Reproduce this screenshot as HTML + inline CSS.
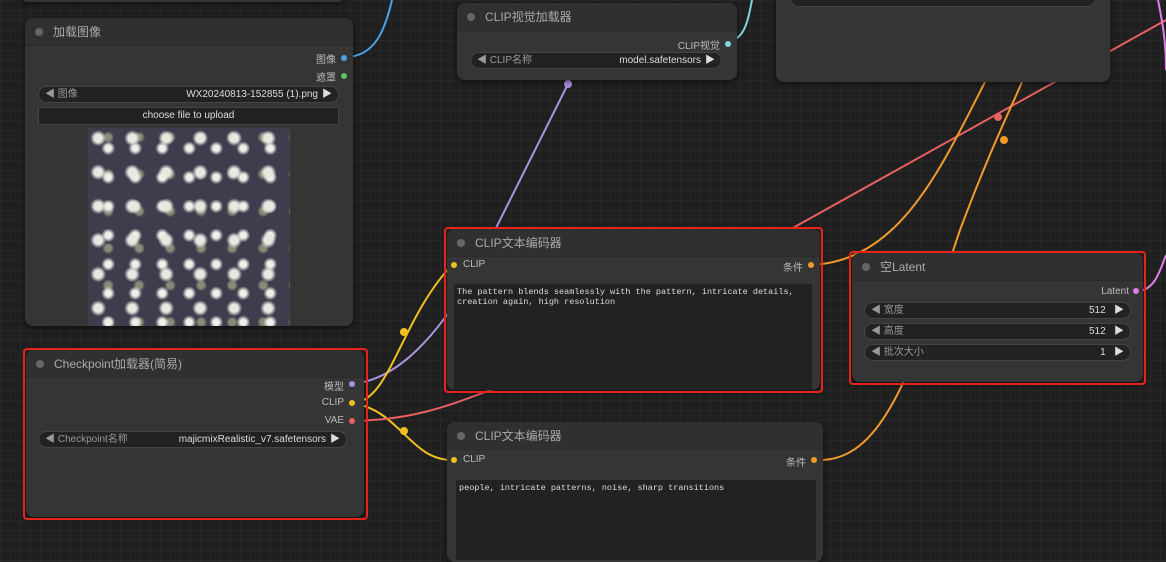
<!DOCTYPE html>
<html><head><meta charset="utf-8"><style>
*{box-sizing:border-box;margin:0;padding:0}
body{width:1166px;height:553px;overflow:hidden;background:#1f1f1f;font-family:"Liberation Sans","Noto Sans CJK SC",sans-serif;position:relative;
background-image:linear-gradient(#272727 1px,transparent 1px),linear-gradient(90deg,#272727 1px,transparent 1px);background-size:10px 10px}
.n{position:absolute;background:#353535;border-radius:8px;box-shadow:0 2px 6px rgba(0,0,0,.5)}
.h{height:28px;background:#303030;border-radius:8px 8px 0 0;color:#aaa;font-size:12px;line-height:28px;padding-left:28px;position:relative;border-bottom:1px solid #2b2b2b}
.h:before{content:"";position:absolute;left:10px;top:10px;width:8px;height:8px;border-radius:50%;background:#666}
.t{position:absolute;font-size:10px;color:#bbb}
.d{position:absolute;width:6px;height:6px;border-radius:50%}
.c{position:absolute;height:17px;background:#222;border:1px solid #444;border-radius:9px;font-size:10px;color:#999;line-height:15px;padding:0 6px}
.c b{font-weight:normal;color:#ddd;position:absolute;right:20px}
.c i{font-style:normal;color:#ddd;position:absolute;right:6px}
.red{position:absolute;border:2px solid #e8231c;border-radius:4px}
.ta{position:absolute;background:#222;font-family:"Liberation Mono",monospace;font-size:8.5px;color:#ddd;padding:3px 3px;line-height:10px}
</style></head><body>
<svg width="1166" height="553" style="position:absolute;left:0;top:0" fill="none" stroke-width="2">
<path d="M345 57 C375 57 385 30 392 0" stroke="#4aa3e8"/>
<path d="M727 42 C745 40 748 20 752 0" stroke="#7ed6e0"/>
<path d="M352 384 C400 380 440 330 470 280 L568 84" stroke="#a993e0"/>
<path d="M352 403 C390 403 400 320 452 265" stroke="#f0c020"/>
<path d="M352 403 C400 410 410 460 452 460" stroke="#f0c020"/>
<path d="M352 421 C430 420 470 395 520 380 L1166 20" stroke="#e86060"/>
<path d="M812 265 C900 260 940 170 985 82" stroke="#f29a2a"/>
<path d="M820 460 C880 460 910 380 960 230 C990 150 1010 110 1022 82" stroke="#f29a2a"/>
<path d="M1137 291 C1155 291 1160 270 1166 255" stroke="#e07ee8"/>
<path d="M1158 0 C1162 20 1166 40 1166 70" stroke="#e07ee8"/>
<circle cx="404" cy="332" r="4" fill="#f0c020"/><circle cx="404" cy="431" r="4" fill="#f0c020"/>
<circle cx="568" cy="84" r="4" fill="#a993e0"/><circle cx="998" cy="117" r="4" fill="#e86060"/><circle cx="1004" cy="140" r="4" fill="#f29a2a"/>
</svg>
<div class="n" style="left:20px;top:-20px;width:325px;height:22px"></div>
<div class="n" style="left:776px;top:-20px;width:334px;height:102px"><div class="c" style="left:14px;top:10px;width:306px"></div></div>

<div class="n" style="left:25px;top:18px;width:328px;height:308px"><div class="h">加载图像</div>
<span class="t" style="right:17px;top:33px">图像</span><span class="d" style="right:6px;top:37px;background:#4aa3e8"></span>
<span class="t" style="right:17px;top:51px">遮罩</span><span class="d" style="right:6px;top:55px;background:#5dc460"></span>
<div class="c" style="left:13px;top:68px;width:301px">◀ 图像<b>WX20240813-152855 (1).png</b><i>▶</i></div>
<div style="position:absolute;left:13px;top:89px;width:301px;height:18px;background:#222;border:1px solid #444;color:#ddd;font-size:10px;text-align:center;line-height:16px">choose file to upload</div>
<div style="position:absolute;left:63px;top:110px;width:202px;height:198px;background:#3d3d4d;background-image:radial-gradient(ellipse at 30% 30%,#e8e8e0 4px,transparent 8px),radial-gradient(ellipse at 75% 70%,#f0f0ea 3px,transparent 7px),radial-gradient(circle at 65% 25%,#8a8a78 3px,transparent 6px);background-size:34px 34px,27px 29px,31px 37px"></div>
</div>

<div class="n" style="left:457px;top:3px;width:280px;height:77px"><div class="h">CLIP视觉加载器</div>
<span class="t" style="right:17px;top:34px">CLIP视觉</span><span class="d" style="right:6px;top:38px;background:#7ed6e0"></span>
<div class="c" style="left:13px;top:49px;width:252px">◀ CLIP名称<b>model.safetensors</b><i>▶</i></div></div>

<div class="n" style="left:447px;top:229px;width:373px;height:161px"><div class="h">CLIP文本编码器</div>
<span class="d" style="left:4px;top:33px;background:#f0c020"></span><span class="t" style="left:16px;top:30px">CLIP</span>
<span class="t" style="right:17px;top:30px">条件</span><span class="d" style="right:6px;top:33px;background:#f29a2a"></span>
<div class="ta" style="left:7px;top:55px;width:358px;height:106px">The pattern blends seamlessly with the pattern, intricate details, creation again, high resolution</div></div>
<div class="red" style="left:444px;top:227px;width:379px;height:166px"></div>

<div class="n" style="left:852px;top:253px;width:291px;height:129px"><div class="h">空Latent</div>
<span class="t" style="right:14px;top:33px">Latent</span><span class="d" style="right:4px;top:35px;background:#e07ee8"></span>
<div class="c" style="left:12px;top:49px;width:267px">◀ 宽度<i>512 &nbsp;&nbsp;▶</i></div>
<div class="c" style="left:12px;top:70px;width:267px">◀ 高度<i>512 &nbsp;&nbsp;▶</i></div>
<div class="c" style="left:12px;top:91px;width:267px">◀ 批次大小<i>1 &nbsp;&nbsp;▶</i></div></div>
<div class="red" style="left:849px;top:251px;width:297px;height:134px"></div>

<div class="n" style="left:26px;top:350px;width:338px;height:167px"><div class="h">Checkpoint加载器(简易)</div>
<span class="t" style="right:20px;top:28px">模型</span><span class="d" style="right:9px;top:31px;background:#a993e0"></span>
<span class="t" style="right:20px;top:47px">CLIP</span><span class="d" style="right:9px;top:50px;background:#f0c020"></span>
<span class="t" style="right:20px;top:65px">VAE</span><span class="d" style="right:9px;top:68px;background:#e86060"></span>
<div class="c" style="left:12px;top:81px;width:309px">◀ Checkpoint名称<b>majicmixRealistic_v7.safetensors</b><i>▶</i></div></div>
<div class="red" style="left:23px;top:348px;width:345px;height:172px"></div>

<div class="n" style="left:447px;top:422px;width:376px;height:140px"><div class="h">CLIP文本编码器</div>
<span class="d" style="left:4px;top:35px;background:#f0c020"></span><span class="t" style="left:16px;top:32px">CLIP</span>
<span class="t" style="right:17px;top:32px">条件</span><span class="d" style="right:6px;top:35px;background:#f29a2a"></span>
<div class="ta" style="left:9px;top:58px;width:360px;height:80px">people, intricate patterns, noise, sharp transitions</div></div>
</body></html>
